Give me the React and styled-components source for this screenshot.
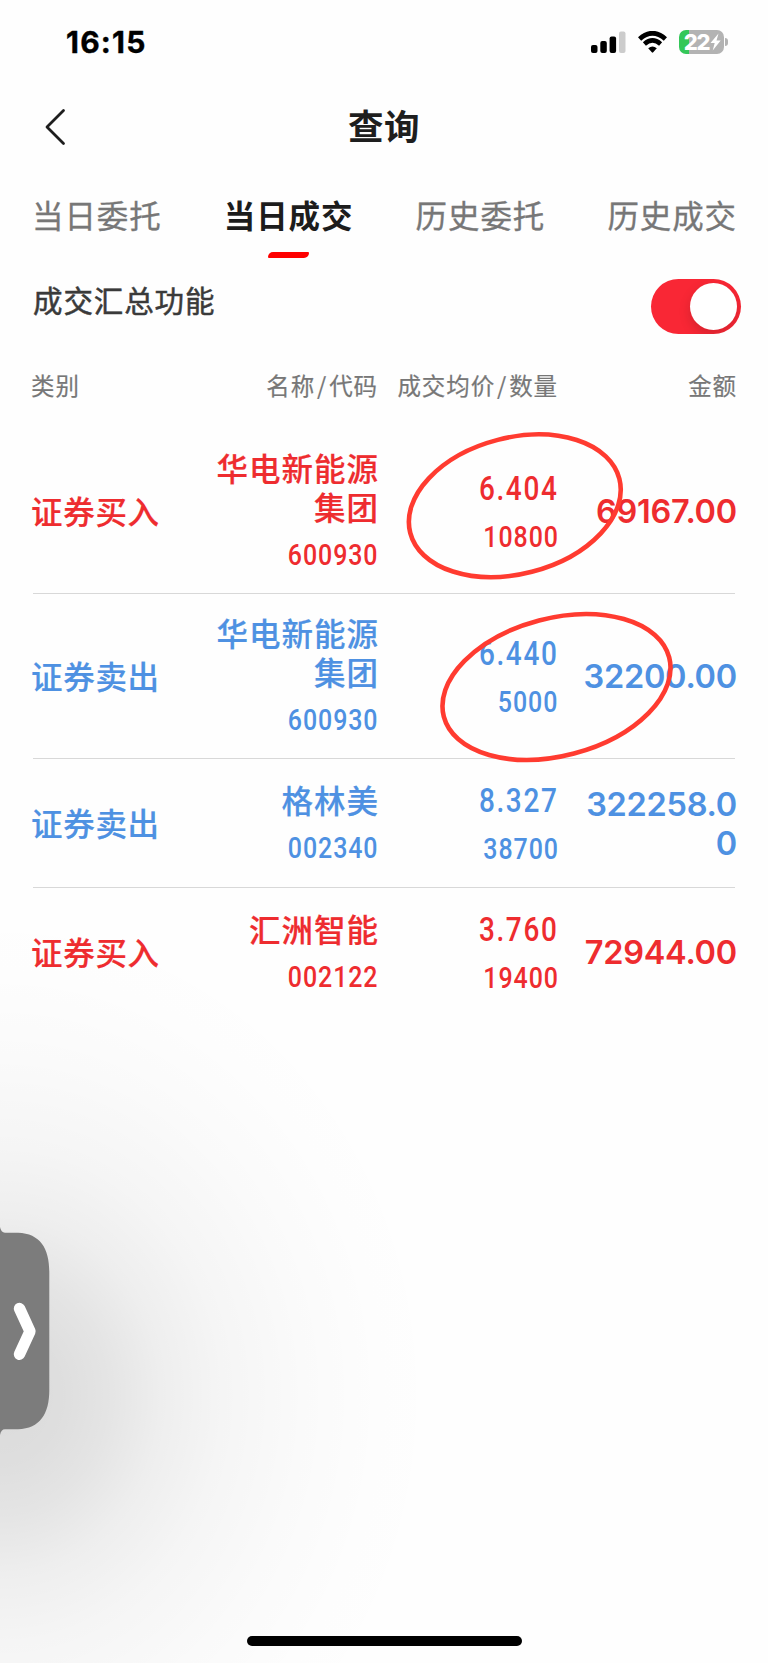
import React from "react";
import styled, { createGlobalStyle } from "styled-components";

const RED = "#ee2c2f";
const BLUE = "#4e91e2";

const GlobalStyle = createGlobalStyle`
  *, *::before, *::after { box-sizing: border-box; }
  body {
    margin: 0;
    background: #fefefe;
    font-family: "Noto Sans CJK SC", "Noto Sans", sans-serif;
    -webkit-font-smoothing: antialiased;
  }
`;

const Screen = styled.main`
  position: relative;
  display: flex;
  flex-direction: column;
  width: 768px;
  height: 1663px;
  overflow: hidden;
  background: radial-gradient(
      ellipse 450px 500px at 0 1395px,
      rgba(0, 0, 0, 0.14) 0%,
      rgba(0, 0, 0, 0.127) 14%,
      rgba(0, 0, 0, 0.1) 24%,
      rgba(0, 0, 0, 0.064) 36%,
      rgba(0, 0, 0, 0.034) 50%,
      rgba(0, 0, 0, 0.014) 68%,
      rgba(0, 0, 0, 0.005) 85%,
      rgba(0, 0, 0, 0) 100%
    ),
    #fefefe;
`;

const StatusBar = styled.header`
  display: flex;
  align-items: center;
  justify-content: space-between;
  height: 84px;
  padding: 0 40px 0 66px;
`;

const Clock = styled.span`
  font: 700 30px/36px Inter, sans-serif;
  letter-spacing: 1.2px;
  color: #000;
  -webkit-text-stroke: 0.4px #000;
`;

const StatusIcons = styled.div`
  display: flex;
  align-items: center;
`;

const Signal = styled.svg`
  margin-right: 12px;
`;

const Wifi = styled.svg`
  margin-right: 12px;
`;

const Battery = styled.div`
  display: flex;
  align-items: center;
  justify-content: center;
  width: 45px;
  height: 24px;
  padding-left: 3px;
  border-radius: 7px;
  background: linear-gradient(90deg, #34c759 10px, #b3b3b3 10px);
  color: #fff;
  font: 800 22px/24px Inter, sans-serif;
  letter-spacing: -1.3px;
`;

const BatteryTip = styled.i`
  width: 3px;
  height: 8px;
  margin-left: 1px;
  border-radius: 0 4px 4px 0;
  background: #b3b3b3;
`;

const NavBar = styled.nav`
  display: grid;
  grid-template-columns: 100px 1fr 100px;
  align-items: center;
  height: 86px;
`;

const BackButton = styled.button`
  display: flex;
  padding: 0 0 0 44px;
  border: 0;
  background: none;
`;

const Title = styled.h1`
  margin: -4px 0 0;
  text-align: center;
  color: #1e1e1e;
  font-size: 35.5px;
  font-weight: 700;
  line-height: 50px;
  letter-spacing: 0.4px;
`;

const Tabs = styled.div`
  display: flex;
  justify-content: space-between;
  height: 90px;
  padding: 21px 31px 0 32px;
`;

const Tab = styled.button`
  display: flex;
  flex-direction: column;
  align-items: center;
  padding: 0;
  border: 0;
  background: none;
  color: ${(p) => (p.$active ? "#1c1c1c" : "#777")};
  font-family: inherit;
  font-size: 31.5px;
  font-weight: ${(p) => (p.$active ? 700 : 400)};
  line-height: 46px;
  letter-spacing: 0.9px;
  -webkit-text-stroke: ${(p) => (p.$active ? "0" : "0.3px #777")};
`;

const TabMark = styled.i`
  width: 41px;
  height: 6px;
  margin-top: 15px;
  border-radius: 5px 1px 5px 1px;
  background: #fe0000;
`;

const SummaryRow = styled.section`
  display: flex;
  align-items: flex-start;
  justify-content: space-between;
  height: 104px;
  padding: 19px 27px 0 33px;
`;

const SummaryLabel = styled.span`
  margin-top: -1px;
  color: #3a3a3a;
  font-size: 29.5px;
  font-weight: 400;
  line-height: 42px;
  letter-spacing: 0.9px;
  -webkit-text-stroke: 0.5px #3a3a3a;
`;

const Toggle = styled.button`
  display: flex;
  align-items: center;
  justify-content: flex-end;
  width: 90px;
  height: 55px;
  padding: 0 4px;
  overflow: hidden;
  border: 0;
  border-radius: 28px;
  background: #f92735;
`;

const Knob = styled.i`
  width: 47px;
  height: 47px;
  border-radius: 50%;
  background: #fff;
  box-shadow: 0 5px 12px rgba(70, 20, 20, 0.2);
`;

const Row = styled.div`
  display: grid;
  grid-template-columns: 172px 175px 180px 179px;
  align-items: center;
  margin: 0 30px 0 31px;
`;

const HeadRow = styled(Row)`
  height: 40px;
  color: #777;
  font-size: 23.5px;
  line-height: 34px;
  letter-spacing: 0.9px;
  -webkit-text-stroke: 0.2px #777;
`;

const HeadCell = styled.span`
  margin-top: 1px;
  text-align: ${(p) => (p.$start ? "left" : "right")};
  white-space: nowrap;
`;

const Slash = styled.span`
  margin: 0 2px;
`;

const Trades = styled.div`
  display: flex;
  flex-direction: column;
  padding-top: 25px;
`;

const TradeRow = styled(Row)`
  height: ${(p) => p.$height}px;
  color: ${(p) => (p.$side === "buy" ? RED : BLUE)};
  background: ${(p) =>
    p.$last
      ? "none"
      : "linear-gradient(#d8d8d8, #d8d8d8) 2px 100% / 702px 1.5px no-repeat"};
  font-weight: 500;
`;

const Kind = styled.span`
  margin-top: -2px;
  font-size: 31.5px;
  line-height: 39px;
  letter-spacing: 0.7px;
  -webkit-text-stroke: 0.2px currentColor;
`;

const Stack = styled.div`
  display: flex;
  flex-direction: column;
  align-items: flex-end;
  text-align: right;
`;

const StockName = styled.span`
  max-width: 168px;
  margin: -2px -0.9px 0 0;
  font-size: 31.5px;
  line-height: 39px;
  letter-spacing: 1px;
  -webkit-text-stroke: 0.2px currentColor;
`;

const Figure = styled.span`
  font-family: Roboto, sans-serif;
  transform: scaleX(0.86);
  transform-origin: right center;
`;

const Small = styled(Figure)`
  margin: 11px -0.7px 0 0;
  font-size: 29px;
  line-height: 36px;
  letter-spacing: 1.1px;
`;

const Price = styled(Figure)`
  margin: 3px -0.6px 0 0;
  font-size: 32.5px;
  line-height: 37px;
  letter-spacing: 1.9px;
`;

const Amount = styled.span`
  justify-self: end;
  width: 156px;
  text-align: right;
  word-break: break-all;
  font: 600 32.5px/39px Inter, sans-serif;
  letter-spacing: -0.25px;
`;

const Spacer = styled.div`
  flex: 1;
`;

const HomeIndicator = styled.div`
  align-self: center;
  width: 275px;
  height: 10px;
  margin-bottom: 17px;
  border-radius: 5px;
  background: #000;
`;

const Markup = styled.svg`
  position: absolute;
  top: 0;
  left: 0;
  pointer-events: none;
`;

const SideHandle = styled.svg`
  position: absolute;
  top: 1224px;
  left: 0;
`;

const trades = [
  { side: "buy", name: "华电新能源集团", code: "600930", price: "6.404", count: "10800", amount: "69167.00", height: 165 },
  { side: "sell", name: "华电新能源集团", code: "600930", price: "6.440", count: "5000", amount: "32200.00", height: 165 },
  { side: "sell", name: "格林美", code: "002340", price: "8.327", count: "38700", amount: "322258.00", height: 129 },
  { side: "buy", name: "汇洲智能", code: "002122", price: "3.760", count: "19400", amount: "72944.00", height: 129 },
];

const tabs = ["当日委托", "当日成交", "历史委托", "历史成交"];

export default function App() {
  return (
    <Screen>
      <GlobalStyle />
      <StatusBar>
        <Clock>16:15</Clock>
        <StatusIcons>
          <Signal width="35" height="22" viewBox="0 0 35 22">
            <rect x="0" y="14" width="6.5" height="8" rx="2" />
            <rect x="9.3" y="10" width="6.5" height="12" rx="2" />
            <rect x="18.6" y="5.5" width="6.5" height="16.5" rx="2" />
            <rect x="28" y="0.5" width="6.5" height="21.5" rx="2" fill="#ccc" />
          </Signal>
          <Wifi width="29" height="22" viewBox="0 0 29 22">
            <path d="M1.6 8 Q14.5 -3.4 27.4 8" fill="none" stroke="#000" strokeWidth="4.8" />
            <path d="M6.4 13 Q14.5 5.9 22.6 13" fill="none" stroke="#000" strokeWidth="4.6" />
            <path d="M10.2 17.3 Q14.5 13.6 18.8 17.3 L15.2 21.3 Q14.5 22 13.8 21.3 Z" />
          </Wifi>
          <Battery>
            22
            <svg width="13" height="18" viewBox="0 0 12 18">
              <path d="M9 0.5 L1 10 H5.2 L3.2 17.5 L11.2 7.6 H7 Z" fill="#fff" />
            </svg>
          </Battery>
          <BatteryTip />
        </StatusIcons>
      </StatusBar>

      <NavBar>
        <BackButton aria-label="返回">
          <svg width="23" height="38" viewBox="0 0 23 38">
            <path d="M19.5 2.5 L3 19 L19.5 35.5" fill="none" stroke="#1e1e1e" strokeWidth="2.8" strokeLinecap="round" strokeLinejoin="round" />
          </svg>
        </BackButton>
        <Title>查询</Title>
      </NavBar>

      <Tabs>
        {tabs.map((label, i) => (
          <Tab key={label} $active={i === 1}>
            {label}
            {i === 1 && <TabMark />}
          </Tab>
        ))}
      </Tabs>

      <SummaryRow>
        <SummaryLabel>成交汇总功能</SummaryLabel>
        <Toggle role="switch" aria-checked="true">
          <Knob />
        </Toggle>
      </SummaryRow>

      <HeadRow>
        <HeadCell $start>类别</HeadCell>
        <HeadCell>名称<Slash>/</Slash>代码</HeadCell>
        <HeadCell>成交均价<Slash>/</Slash>数量</HeadCell>
        <HeadCell>金额</HeadCell>
      </HeadRow>

      <Trades>
        {trades.map((t, i) => (
          <TradeRow key={i} $side={t.side} $height={t.height} $last={i === trades.length - 1}>
            <Kind>{t.side === "buy" ? "证券买入" : "证券卖出"}</Kind>
            <Stack>
              <StockName>{t.name}</StockName>
              <Small>{t.code}</Small>
            </Stack>
            <Stack>
              <Price>{t.price}</Price>
              <Small>{t.count}</Small>
            </Stack>
            <Amount>{t.amount}</Amount>
          </TradeRow>
        ))}
      </Trades>

      <Spacer />
      <HomeIndicator />

      <Markup width="768" height="800" viewBox="0 0 768 800" fill="none" stroke="#ff3b30" strokeWidth="4.6">
        <ellipse cx="514.8" cy="505.8" rx="108" ry="68.1" transform="rotate(-14.5 514.8 505.8)" />
        <ellipse cx="556.5" cy="687" rx="116.5" ry="68.8" transform="rotate(-14.7 556.5 687)" />
      </Markup>

      <SideHandle width="50" height="214" viewBox="0 0 50 214">
        <path d="M0 3 Q1 8.7 5 8.7 H18 C40 9.5 49.3 24 49.3 48 V166 C49.3 190 40 204.5 18 205.3 H5 Q1 205.3 0 211 Z" fill="#7c7c7c" />
        <path d="M19.5 84.5 L30 107.3 L19.5 130.2" fill="none" stroke="#fff" strokeWidth="11.4" strokeLinecap="round" strokeLinejoin="round" />
      </SideHandle>
    </Screen>
  );
}
